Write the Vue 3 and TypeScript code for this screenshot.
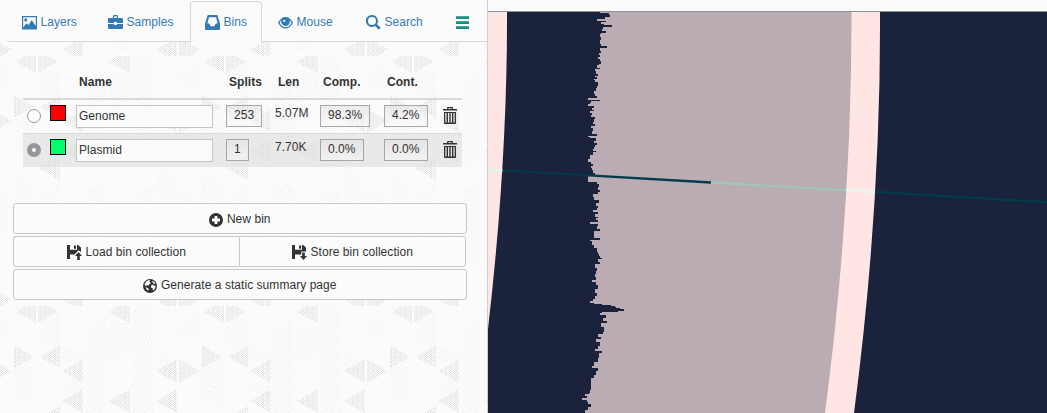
<script setup lang="ts">
interface Bin {
  name: string
  color: string
  splits: string
  len: string
  comp: string
  cont: string
  selected: boolean
}

const tabs = [
  { id: 'layers', label: 'Layers' },
  { id: 'samples', label: 'Samples' },
  { id: 'bins', label: 'Bins' },
  { id: 'mouse', label: 'Mouse' },
  { id: 'search', label: 'Search' },
]

const bins: Bin[] = [
  { name: 'Genome', color: '#ff0000', splits: '253', len: '5.07M', comp: '98.3%', cont: '4.2%', selected: false },
  { name: 'Plasmid', color: '#00ff6a', splits: '1', len: '7.70K', comp: '0.0%', cont: '0.0%', selected: true },
]

// Coverage profile: each pair is a start row and the bar length from that row on.
const upper: [number, number][] = [
  [12, 600], [13, 609], [15, 610], [17, 605], [19, 597], [21, 606], [22, 601], [24, 604], [25, 612], [27, 603],
  [29, 602], [31, 606], [33, 601], [34, 600], [37, 601], [40, 600], [44, 601], [46, 607], [48, 600], [51, 601],
  [53, 599], [55, 600], [57, 598], [59, 600], [61, 601], [64, 599], [65, 597], [68, 600], [69, 595], [71, 596],
  [74, 598], [76, 595], [77, 597], [79, 594], [80, 595], [82, 598], [86, 597], [88, 596], [91, 594], [94, 595],
  [96, 597], [98, 588], [100, 600], [101, 591], [103, 590], [104, 588], [106, 594], [108, 592], [110, 594],
  [111, 590], [113, 592], [115, 591], [117, 595], [119, 594], [122, 593], [124, 595], [126, 591], [128, 593],
  [131, 592], [134, 597], [136, 588], [137, 590], [138, 596], [141, 594], [143, 597], [145, 595], [147, 594],
  [149, 593], [151, 596], [152, 593], [155, 590], [159, 588], [162, 591], [164, 593], [166, 591], [168, 592],
  [170, 593], [173, 595], [176, 588], [182, 597], [184, 599], [187, 598], [190, 600], [192, 598], [194, 593],
  [197, 594], [200, 599], [203, 596], [206, 598], [208, 597], [210, 593], [212, 598], [214, 595], [217, 598],
  [218, 596], [220, 598], [222, 590], [224, 598], [226, 597], [229, 600], [231, 594], [238, 600], [240, 590],
  [241, 592], [245, 594], [248, 597], [252, 598], [254, 599], [256, 600], [258, 602], [259, 598], [262, 600],
  [264, 595], [268, 597], [271, 596], [274, 595], [277, 596], [280, 592], [282, 596], [285, 598], [289, 595],
  [293, 597], [296, 595], [299, 593], [301, 590],
]
const lower: [number, number][] = [
  [312, 602], [313, 600], [315, 606], [318, 603], [321, 607], [323, 601], [327, 604], [332, 603], [334, 598],
  [337, 601], [339, 596], [342, 600], [346, 598], [349, 595], [351, 602], [353, 599], [358, 598], [362, 594],
  [366, 592], [368, 598], [371, 596], [375, 594], [378, 591], [384, 591], [390, 590], [393, 589], [394, 585],
  [396, 587], [398, 582], [400, 587], [402, 588], [404, 591], [407, 588], [410, 585],
]

const steps = (rows: [number, number][]): string => rows.map(([y, x]) => `V${y} H${x}`).join(' ')
const profile = `M560 12 ${steps(upper)} V303 L615 306 L616 308 L624 309 V311 L612 312 ${steps(lower)} V413 H560 Z`
</script>

<template>
  <div class="page">
    <aside class="panel">
      <svg class="texture" width="487" height="372" aria-hidden="true">
        <defs>
          <pattern id="dense" width="5" height="4" patternUnits="userSpaceOnUse">
            <path d="M0 0h2v1H0zM3 0h1v1H3zM1 1h1v1H1zM4 1h1v1H4zM0 2h1v1H0zM2 2h2v1H2zM1 3h1v1H1zM4 3h1v1H4z" fill="#e4e6e5" />
          </pattern>
          <pattern id="light" width="11" height="9" patternUnits="userSpaceOnUse">
            <path d="M1 0h1v1H1zM5 1h1v1H5zM9 0h1v1H9zM3 3h1v1H3zM0 5h1v1H0zM7 4h1v1H7zM4 6h1v1H4zM9 7h1v1H9zM2 8h1v1H2z" fill="#ebeeed" />
            <path d="M10 3h1v1H10zM6 7h1v1H6z" fill="#f9eeec" />
          </pattern>
          <pattern id="tile" x="14" y="15" width="188" height="250" patternUnits="userSpaceOnUse">
            <path fill="url(#light)" d="M0 56H22V100L0 92ZM24 16L46 8V44L24 38ZM48 39L69 50V60L48 54ZM48 78L69 70V93L48 84ZM71 25L92 12V108H71ZM94 17H116V44L94 60ZM118 0H139V110H118ZM142 46L163 54V64H142ZM165 18L186 6V34L165 28ZM0 116L22 128V168H0ZM24 142L46 130V180L24 190ZM71 130H92V214L71 202ZM118 140L139 128V210H118ZM142 108L163 120V170H142ZM165 132L186 144V178H165ZM48 186L69 174V222H48ZM94 198L116 210V244H94ZM0 202L22 190V240H0Z" />
            <path fill="url(#dense)" d="M2 6L12 0H22V17ZM44 6L34 0H24V17ZM94 6L104 0H116V17ZM20 51L0 39V62ZM26 51L46 39V62ZM48 65L69 53V77ZM142 65L163 53V77ZM186 65L165 53V77ZM48 95L69 83V107ZM94 95L116 83V107ZM142 95L163 83V107ZM24 112L46 100V124ZM48 243L69 232V250H58ZM142 243L163 232V250H152ZM186 243L165 232V250H176Z" />
          </pattern>
        </defs>
        <rect width="487" height="372" fill="url(#tile)" shape-rendering="crispEdges" />
      </svg>

      <nav class="tabs">
        <a v-for="tab in tabs" :key="tab.id" class="tab" :class="[tab.id, { active: tab.id === 'bins' }]">
          <svg class="icon" viewBox="0 0 15 15">
            <path v-if="tab.id === 'layers'" fill-rule="evenodd" d="M0 1H15V14.5H0ZM1.2 2.2V12.5L4.5 8.2 6.5 9.9 9.6 5 13.8 11V2.2ZM3.8 3.3a1.6 1.6 0 1 1 0 3.2a1.6 1.6 0 0 1 0-3.2Z" />
            <path v-else-if="tab.id === 'samples'" fill-rule="evenodd" d="M5 3V1.2Q5 0 6.2 0H8.8Q10 0 10 1.2V3H13.7Q15 3 15 4.3V8H9V7H6V8H0V4.3Q0 3 1.3 3ZM6.2 3H8.8V1.3H6.2ZM0 9H6V10H9V9H15V12.7Q15 14 13.7 14H1.3Q0 14 0 12.7Z" />
            <path v-else-if="tab.id === 'bins'" fill-rule="evenodd" d="M2.7 0H12.3L15 8.5V13.7Q15 15 13.7 15H1.3Q0 15 0 13.7V8.5ZM4 2.3L2.4 8.6H4.2L5.7 11.3H9.3L10.8 8.6H12.6L11 2.3Z" />
            <g v-else-if="tab.id === 'mouse'">
              <path fill-rule="evenodd" d="M0 7.7Q3 2 7.5 2T15 7.7Q12 13.5 7.5 13.5T0 7.7ZM1.5 7.7Q4 12.3 7.5 12.3T13.5 7.7Q12.5 5.6 10.7 4.4a4 4 0 1 1-6.4 0Q2.5 5.6 1.5 7.7Z" />
              <path d="M3.5 6.5a4 4 0 0 1 8 0a4 4 0 0 1-8 0Z" />
              <circle cx="6.2" cy="5.9" r="1.1" fill="#fbfbfb" />
            </g>
            <path v-else fill-rule="evenodd" d="M6 0a6 6 0 0 1 5 9.2L14.7 12.8 12.8 14.7 9.2 11A6 6 0 1 1 6 0ZM6 2a4 4 0 1 0 0 8a4 4 0 0 0 0-8Z" />
          </svg>
          <span>{{ tab.label }}</span>
        </a>
        <a class="tab menu">
          <svg class="bars" viewBox="0 0 13 13"><path d="M0 .2H13V3H0ZM0 5.2H13V8H0ZM0 10.2H13V13H0Z" /></svg>
        </a>
      </nav>

      <section class="bins-table">
        <div class="grid head">
          <b class="name-head">Name</b><b>Splits</b><b>Len</b><b>Comp.</b><b>Cont.</b>
        </div>
        <div v-for="bin in bins" :key="bin.name" class="grid row" :class="{ selected: bin.selected }">
          <span class="radio" :class="{ on: bin.selected }"></span>
          <span class="swatch" :style="{ backgroundColor: bin.color }"></span>
          <span class="field">{{ bin.name }}</span>
          <span class="badge">{{ bin.splits }}</span>
          <span class="len">{{ bin.len }}</span>
          <span class="badge">{{ bin.comp }}</span>
          <span class="badge">{{ bin.cont }}</span>
          <svg class="trash" viewBox="0 0 14 17">
            <path fill-rule="evenodd" d="M4 2V1Q4 0 5 0H9Q10 0 10 1V2H14V3.6H0V2ZM5.2 2H8.8V1.2H5.2ZM1 5H13V16Q13 17 12 17H2Q1 17 1 16ZM2.3 6V15.6H3.6V6ZM5 6V15.6H6.3V6ZM7.7 6V15.6H9V6ZM10.4 6V15.6H11.7V6Z" />
          </svg>
        </div>
      </section>

      <section class="actions">
        <button class="btn">
          <svg class="glyph" viewBox="0 0 14 14"><path fill-rule="evenodd" d="M7 0a7 7 0 1 1 0 14A7 7 0 0 1 7 0ZM5.6 3V5.6H3V8.4H5.6V11H8.4V8.4H11V5.6H8.4V3Z" /></svg>
          <span>New bin</span>
        </button>
        <div class="pair">
          <button class="btn">
            <svg class="glyph save" viewBox="0 0 15 15"><path fill-rule="evenodd" d="M0 0H3V4.7H10V0H11L14 2.5V7L11.5 5.2 7.5 9.5H3V14H0ZM7 .5H9V3.7H7Z" /><path d="M11.5 7L15 11H12.8V15H10.2V11H8Z" /></svg>
            <span>Load bin collection</span>
          </button>
          <button class="btn">
            <svg class="glyph save" viewBox="0 0 15 15"><path fill-rule="evenodd" d="M0 0H3V4.7H10V0H11L14 2.5V6.5H9.3V9.5H3V14H0ZM7 .5H9V3.7H7Z" /><path d="M10.2 7.5H12.8V11H15L11.5 15 8 11H10.2Z" /></svg>
            <span>Store bin collection</span>
          </button>
        </div>
        <button class="btn">
          <svg class="glyph" viewBox="0 0 14 14"><circle cx="7" cy="7" r="7" /><path fill="#fbfbfb" d="M3.2 2.2L6 1 7.2 1.8 6.5 3 8.4 4.1 6.5 5 5.3 6.5 3.6 6.2 3 7.2 1.4 5.4ZM9.2 1.5L11.3 2.9 12.5 5 10.8 4.8 9.7 3.8ZM8.2 6.2L10 5.8 12.8 7.3 11.9 9.8 10 11.8 9.7 9.4 8 8.4ZM2.4 8L5 9.2 6 10.3 5 11.6 3.8 10.6Z" /></svg>
          <span>Generate a static summary page</span>
        </button>
      </section>
    </aside>

    <main class="canvas">
      <svg width="559" height="413" viewBox="488 0 559 413">
        <rect x="488" y="12" width="559" height="401" fill="#1a233b" />
        <path fill="#ffe5e4" d="M488 12H507Q507.5 160 488 329Z" />
        <path fill="#ffe5e4" d="M580 12H880Q881 207 854 413H580Z" />
        <path fill="#bbacb3" d="M580 12H851.5Q852 207 825 413H580Z" />
        <path fill="#1a233b" :d="profile" shape-rendering="crispEdges" />
        <g fill="none" stroke-width="2.3">
          <path d="M488 169.5L503 170.3" stroke="#e2f5ea" />
          <path d="M502.5 170.3L590 175.3" stroke="#043849" />
          <path d="M589 175.3L711 182.5" stroke="#023b49" />
          <path d="M711 182.5L846.5 190.3" stroke="#a2c4b9" />
          <path d="M846 190.3L875 192" stroke="#e4f8f0" />
          <path d="M875 192L1047 202.2" stroke="#023b49" />
        </g>
        <path d="M488 11.5H1047" stroke="#8c9098" />
      </svg>
    </main>
  </div>
</template>

<style>
body { margin: 0; background: #fbfbfb; }
</style>

<style scoped>
.page {
  display: flex;
  width: 1047px;
  height: 413px;
  overflow: hidden;
  background: #fbfbfb;
  color: #333;
  font: 12px/17px "Liberation Sans", Arial, sans-serif;
  letter-spacing: 0.04px;
}
.panel {
  position: relative;
  box-sizing: border-box;
  width: 488px;
  height: 413px;
  border-right: 1px solid #cfd0d0;
}
.texture { position: absolute; left: 0; top: 41px; }
.canvas svg { display: block; }
.tabs {
  position: relative;
  display: flex;
  box-sizing: border-box;
  height: 42px;
  margin-left: 7px;
  padding-top: 1px;
  border-bottom: 1px solid #d8d8d8;
  background: #fbfbfb;
  color: #337ab7;
}
.tab {
  display: flex;
  box-sizing: border-box;
  flex: none;
  align-items: flex-start;
  gap: 3.5px;
  height: 41px;
  padding: 13px 0 0 15px;
}
.icon { width: 15px; height: 15px; margin-top: 1px; fill: currentColor; }
.layers { width: 86px; }
.samples { width: 97px; }
.bins { width: 72px; }
.mouse { width: 88px; padding-left: 16px; }
.search { width: 106px; padding-left: 16px; }
.menu { padding: 15px 0 0; }
.active {
  padding: 12px 0 0 14px;
  border: 1px solid #d6d6d6;
  border-bottom: 0;
  border-radius: 4px 4px 0 0;
  background: #fbfbfb;
}
.tab.active { height: 42px; }
.bars { width: 13px; height: 13px; fill: #15907f; }
.bins-table { position: relative; width: 439px; margin: 32px 0 0 23px; }
.grid { display: grid; grid-template-columns: 27px 26px 150px 49px 45px 64px 59px 19px; align-items: start; }
.head { height: 24px; border-bottom: 2px solid #d9d9d9; }
.head b { padding-left: 3px; }
.name-head { grid-column: 3; }
.row { box-sizing: border-box; height: 33px; padding-top: 5px; }
.row + .row.selected { height: 34px; border-top: 1px solid #dadada; background: rgba(222, 222, 222, 0.6); }
.radio {
  box-sizing: border-box;
  width: 14px;
  height: 14px;
  margin: 4px 0 0 4px;
  border: 1px solid #999;
  border-radius: 50%;
  background: #fbfbfb;
}
.radio.on { border: 5px solid #95959b; }
.swatch { box-sizing: border-box; width: 16px; height: 16px; border: 1px solid #000; }
.field {
  box-sizing: border-box;
  width: 137px;
  height: 23px;
  padding: 2px 2px;
  border: 1px solid #c4c4c4;
  background: #fbfbfb;
}
.badge {
  box-sizing: border-box;
  justify-self: start;
  height: 22px;
  padding: 1px 7px;
  border: 1px solid #aaa6a8;
  background: linear-gradient(rgba(225, 225, 225, 0.6), rgba(251, 251, 251, 0.5));
}
.len { margin-top: 0; }
.trash { width: 14px; height: 17px; margin-top: 2px; fill: #333; }
.actions { position: relative; display: flex; flex-direction: column; gap: 2px; width: 454px; margin: 36px 0 0 13px; }
.btn {
  display: flex;
  box-sizing: border-box;
  align-items: center;
  justify-content: center;
  gap: 3.5px;
  height: 31px;
  padding: 1px 0 0;
  border: 1px solid #c8c8c8;
  border-radius: 3px;
  background: #fbfbfb;
  color: #333;
  font: inherit;
  letter-spacing: 0.05px;
}
.pair { display: flex; width: 453px; }
.pair .btn { flex: 1; }
.pair .btn:first-child { border-right: 0; border-radius: 3px 0 0 3px; }
.pair .btn:last-child { border-radius: 0 3px 3px 0; }
.glyph { width: 14px; height: 14px; margin-top: 1px; fill: #333; }
.save { width: 15px; height: 15px; margin-top: 1px; }
</style>
